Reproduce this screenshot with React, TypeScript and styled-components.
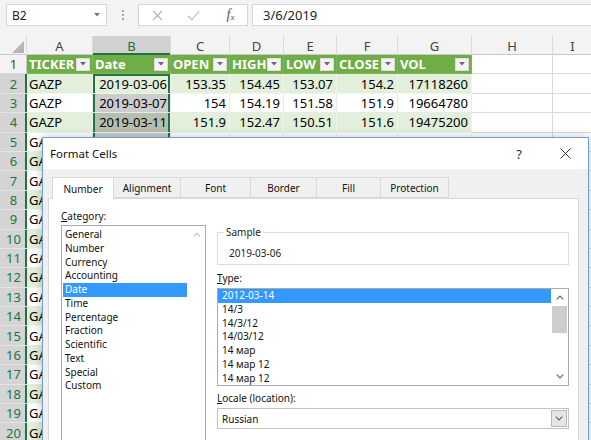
import React from 'react'
import styled, { createGlobalStyle } from 'styled-components'

const GlobalStyle = createGlobalStyle`
  html, body {
    margin: 0;
    padding: 0;
    background: #fff;
  }
  body {
    overflow: hidden;
    font-family: "Noto Sans", "Liberation Sans", sans-serif;
  }
`

type Band = 'head' | 'even' | 'odd' | 'plain'

const bandBg: Record<Band, string> = {
  head: '#70ad47',
  even: '#e2efda',
  odd: '#ffffff',
  plain: '#ffffff'
}

const bandLine: Record<Band, string> = {
  head: '#7db559',
  even: '#f1f6ed',
  odd: '#e9e9e9',
  plain: '#dadada'
}

const GREEN = '#217346'

const Root = styled.div`
  position: relative;
  width: 591px;
  height: 440px;
  overflow: hidden;
  background: #fff;
`

/* ---------- formula bar ---------- */

const TopArea = styled.div`
  box-sizing: border-box;
  height: 36px;
  padding: 4px 0 0 6px;
  display: flex;
  align-items: flex-start;
  background: #f3f3f3;
`

const NameBox = styled.div`
  box-sizing: border-box;
  width: 101px;
  height: 22px;
  display: flex;
  align-items: center;
  justify-content: space-between;
  padding: 0 6px 0 5px;
  background: #fff;
  border: 1px solid #d6d6d6;
  font-size: 12px;
  color: #222;
`

const Dots = styled.div`
  width: 31px;
  height: 22px;
  display: flex;
  flex-direction: column;
  align-items: center;
  justify-content: center;
  gap: 2px;
  & > span {
    width: 2px;
    height: 2px;
    background: #a6a6a6;
  }
`

const FxBox = styled.div`
  box-sizing: border-box;
  width: 110px;
  height: 22px;
  display: grid;
  grid-template-columns: 36px 37px 37px;
  align-items: center;
  justify-items: center;
  background: #fff;
  border: 1px solid #d6d6d6;
`

const Fx = styled.span`
  font-family: "Liberation Serif", serif;
  font-style: italic;
  font-size: 14px;
  color: #555;
  & > sub {
    font-size: 9px;
    vertical-align: -1px;
  }
`

const FormulaInput = styled.div`
  box-sizing: border-box;
  flex: 1;
  height: 22px;
  margin: 0 -2px 0 4px;
  padding-left: 10px;
  display: flex;
  align-items: center;
  background: #fff;
  border: 1px solid #d6d6d6;
  font-size: 13px;
  color: #222;
`

/* ---------- sheet ---------- */

const Sheet = styled.div`
  display: grid;
  grid-template-columns: 27px 66px 78px 59px 54px 53px 61px 74px 81px 40px;
  grid-template-rows: 19px repeat(20, 19.4px);
  font-size: 13px;
  color: #000;
`

const Corner = styled.div`
  box-sizing: border-box;
  display: flex;
  align-items: flex-end;
  justify-content: flex-end;
  padding: 0 2px 2px 0;
  background: #f3f3f3;
  border-right: 1px solid #dadada;
  box-shadow: inset 0 -1px #c8c8c8;
`

const ColHead = styled.div<{ $sel?: boolean }>`
  box-sizing: border-box;
  display: flex;
  align-items: center;
  justify-content: center;
  background: ${p => (p.$sel ? '#d2d2d2' : '#f3f3f3')};
  color: ${p => (p.$sel ? GREEN : '#444')};
  border-right: 1px solid #dadada;
  box-shadow: ${p => (p.$sel ? `inset 0 -2px ${GREEN}` : 'inset 0 -1px #c8c8c8')};
`

const RowHead = styled.div<{ $sel?: boolean }>`
  box-sizing: border-box;
  display: flex;
  align-items: center;
  justify-content: center;
  background: ${p => (p.$sel ? '#d4d4d4' : '#f3f3f3')};
  color: ${p => (p.$sel ? GREEN : '#444')};
  border-bottom: 1px solid ${p => (p.$sel ? '#e4e4e4' : '#dadada')};
  box-shadow: ${p => (p.$sel ? `inset -2px 0 ${GREEN}` : 'inset -1px 0 #c8c8c8')};
`

const Cell = styled.div<{ $band: Band; $right?: boolean; $sel?: 'active' | 'range'; $top?: boolean }>`
  box-sizing: border-box;
  display: flex;
  align-items: center;
  justify-content: ${p => (p.$right ? 'flex-end' : 'flex-start')};
  padding: 0 3px 0 2px;
  overflow: hidden;
  white-space: nowrap;
  background: ${p =>
    p.$sel === 'range'
      ? `linear-gradient(rgba(0,0,0,0.2), rgba(0,0,0,0.2)), ${bandBg[p.$band]}`
      : bandBg[p.$band]};
  border-right: 1px solid ${p => bandLine[p.$band]};
  border-bottom: 1px solid ${p => bandLine[p.$band]};
  box-shadow: ${p =>
    p.$sel
      ? `inset 2px 0 ${GREEN}, inset -2px 0 ${GREEN}${p.$top ? `, inset 0 2px ${GREEN}` : ''}`
      : 'none'};
`

const HeadCell = styled(Cell)`
  justify-content: space-between;
  padding: 0 2px;
  color: #fff;
  font-weight: 700;
`

const FilterBtn = styled.span`
  box-sizing: border-box;
  width: 14px;
  height: 13px;
  display: flex;
  align-items: center;
  justify-content: center;
  background: #f4f4f4;
  border: 1px solid #dcdcdc;
`

/* ---------- dialog ---------- */

const Dialog = styled.div`
  position: absolute;
  left: 42px;
  top: 137px;
  width: 547px;
  height: 330px;
  box-sizing: border-box;
  background: #f0f0f0;
  border: 1px solid #6c9fd6;
  box-shadow: 0 0 10px rgba(0, 0, 0, 0.22);
  font-size: 10px;
  color: #000;
`

const TitleBar = styled.div`
  height: 31px;
  display: flex;
  align-items: center;
  padding-left: 7px;
  background: #fff;
`

const Title = styled.span`
  font-size: 11.5px;
  color: #111;
`

const TitleButtons = styled.div`
  margin-left: auto;
  display: flex;
  height: 100%;
`

const TitleBtn = styled.div`
  width: 46px;
  height: 100%;
  display: flex;
  align-items: center;
  justify-content: center;
  font-size: 13px;
  color: #333;
`

const DialogBody = styled.div`
  padding: 8px 9px 0 5px;
`

const Tabs = styled.div`
  display: flex;
  margin-left: 4px;
  height: 21px;
`

const Tab = styled.div<{ $w: number; $active?: boolean }>`
  position: relative;
  z-index: ${p => (p.$active ? 1 : 0)};
  box-sizing: border-box;
  width: ${p => p.$w}px;
  height: ${p => (p.$active ? 22 : 21)}px;
  margin-right: -1px;
  display: flex;
  align-items: center;
  justify-content: center;
  background: ${p => (p.$active ? '#fff' : '#f0f0f0')};
  border: 1px solid #d9d9d9;
  border-bottom: ${p => (p.$active ? 'none' : '1px solid #d9d9d9')};
  color: #111;
`

const Panel = styled.div`
  box-sizing: border-box;
  height: 270px;
  display: flex;
  gap: 11px;
  padding: 10px 9px 0 12px;
  background: #fff;
  border: 1px solid #d9d9d9;
`

const LeftCol = styled.div`
  width: 145px;
  display: flex;
  flex-direction: column;
`

const RightCol = styled.div`
  width: 352px;
  display: flex;
  flex-direction: column;
  padding-top: 17px;
`

const Label = styled.div<{ $mt?: number; $mb?: number }>`
  line-height: 14px;
  margin-top: ${p => p.$mt ?? 0}px;
  margin-bottom: ${p => p.$mb ?? 0}px;
  color: #111;
`

const Accel = styled.span`
  text-decoration: underline;
`

const Group = styled.fieldset`
  margin: 0;
  padding: 0 0 4px 6px;
  border: 1px solid #dcdcdc;
`

const Legend = styled.legend`
  padding: 0 2px;
  line-height: 13px;
  color: #222;
`

const SampleValue = styled.div`
  padding: 8px 0 0 5px;
  line-height: 13px;
  color: #222;
`

const ListBox = styled.div<{ $h: number }>`
  box-sizing: border-box;
  height: ${p => p.$h}px;
  display: flex;
  background: #fff;
  border: 1px solid #a9abb0;
  overflow: hidden;
`

const Items = styled.div<{ $pt: number }>`
  flex: 1;
  padding-top: ${p => p.$pt}px;
`

const Item = styled.div<{ $sel?: boolean; $inset: number; $pl: number }>`
  line-height: 13.75px;
  height: 13.75px;
  margin: 0 ${p => p.$inset}px;
  padding-left: ${p => p.$pl}px;
  background: ${p => (p.$sel ? '#3399ff' : 'transparent')};
  color: ${p => (p.$sel ? '#fff' : '#111')};
  white-space: nowrap;
`

const ScrollBar = styled.div`
  width: 17px;
  display: flex;
  flex-direction: column;
`

const ScrollBtn = styled.div`
  height: 17px;
  display: flex;
  align-items: center;
  justify-content: center;
`

const Track = styled.div`
  flex: 1;
  display: flex;
  flex-direction: column;
  align-items: center;
`

const Thumb = styled.div`
  width: 15px;
  height: 27px;
  background: #cdcdcd;
`

const Combo = styled.div`
  box-sizing: border-box;
  height: 21px;
  display: flex;
  align-items: center;
  padding: 0 1px 0 4px;
  background: #fff;
  border: 1px solid #c2c2c2;
  color: #111;
`

const ComboBtn = styled.div`
  box-sizing: border-box;
  margin-left: auto;
  width: 16px;
  height: 17px;
  display: flex;
  align-items: center;
  justify-content: center;
  background: #e5e5e5;
  border: 1px solid #b8b8b8;
`

/* ---------- icons ---------- */

const Chevron = ({ up, color }: { up?: boolean; color: string }) => (
  <svg width="8" height="5" viewBox="0 0 8 5">
    <path d={up ? 'M0.8 4.3L4 1.1L7.2 4.3' : 'M0.8 0.7L4 3.9L7.2 0.7'} fill="none" stroke={color} strokeWidth="1.1" />
  </svg>
)

const DownTri = ({ color = '#666' }: { color?: string }) => (
  <svg width="6" height="4" viewBox="0 0 6 4">
    <polygon points="0,0 6,0 3,3.5" fill={color} />
  </svg>
)

/* ---------- data ---------- */

const columns = ['A', 'B', 'C', 'D', 'E', 'F', 'G', 'H', 'I']
const headers = ['TICKER', 'Date', 'OPEN', 'HIGH', 'LOW', 'CLOSE', 'VOL']

// rows 5..20 are mostly behind the dialog
const data: string[][] = [
  ['2019-03-06', '153.35', '154.45', '153.07', '154.2', '17118260'],
  ['2019-03-07', '154', '154.19', '151.58', '151.9', '19664780'],
  ['2019-03-11', '151.9', '152.47', '150.51', '151.6', '19475200'],
  ['2019-03-12', '151.6', '153.2', '151.1', '152.9', '18230410'],
  ['2019-03-13', '153', '154.3', '152.4', '153.8', '17650120'],
  ['2019-03-14', '153.9', '155.1', '153.2', '154.7', '20114300'],
  ['2019-03-15', '154.7', '156', '154.1', '155.6', '21340550'],
  ['2019-03-18', '155.5', '156.4', '154.6', '155.1', '16540870'],
  ['2019-03-19', '155.2', '156.9', '154.9', '156.3', '18877120'],
  ['2019-03-20', '156.3', '157.5', '155.4', '156.8', '19023340'],
  ['2019-03-21', '156.9', '158.2', '156.1', '157.9', '22150680'],
  ['2019-03-22', '157.8', '158.4', '155.7', '156.2', '20330910'],
  ['2019-03-25', '156', '156.8', '154.2', '155', '17890230'],
  ['2019-03-26', '155.1', '157.3', '154.9', '157.1', '18450760'],
  ['2019-03-27', '157.2', '158.6', '156.5', '158.1', '19765420'],
  ['2019-03-28', '158', '159.3', '157.4', '158.9', '21004570'],
  ['2019-03-29', '159', '160.2', '158.3', '159.6', '23118940'],
  ['2019-04-01', '159.7', '161', '159.1', '160.4', '20567810'],
  ['2019-04-02', '160.5', '161.4', '159.2', '159.8', '18876030']
]

const tabs = [
  { label: 'Number', w: 62 },
  { label: 'Alignment', w: 68 },
  { label: 'Font', w: 71 },
  { label: 'Border', w: 67 },
  { label: 'Fill', w: 65 },
  { label: 'Protection', w: 69 }
]

const categories = [
  'General', 'Number', 'Currency', 'Accounting', 'Date', 'Time',
  'Percentage', 'Fraction', 'Scientific', 'Text', 'Special', 'Custom'
]

const types = ['2012-03-14', '14/3', '14/3/12', '14/03/12', '14 мар', '14 мар 12', '14 мар 12']

export default function App() {
  return <Root>
    <GlobalStyle />
    <TopArea>
      <NameBox>
        B2
        <DownTri color="#777" />
      </NameBox>
      <Dots><span /><span /><span /></Dots>
      <FxBox>
        <svg width="11" height="11" viewBox="0 0 11 11">
          <path d="M1 1L10 10M10 1L1 10" stroke="#b3b3b3" strokeWidth="1.1" fill="none" />
        </svg>
        <svg width="13" height="11" viewBox="0 0 13 11">
          <path d="M1 6L4.8 9.8L12 1.5" stroke="#b3b3b3" strokeWidth="1.1" fill="none" />
        </svg>
        <Fx>f<sub>x</sub></Fx>
      </FxBox>
      <FormulaInput>3/6/2019</FormulaInput>
    </TopArea>

    <Sheet>
      <Corner>
        <svg width="12" height="12" viewBox="0 0 12 12">
          <polygon points="12,0 12,12 0,12" fill="#b5b5b5" />
        </svg>
      </Corner>
      {
        columns.map(c => <ColHead key={c} $sel={c === 'B'}>{c}</ColHead>)
      }

      <RowHead>1</RowHead>
      {
        headers.map(h => <HeadCell key={h} $band="head">
          {h}
          <FilterBtn><DownTri color="#6a6a6a" /></FilterBtn>
        </HeadCell>)
      }
      <Cell $band="plain" />
      <Cell $band="plain" />

      {
        data.map((row, i) => {
          const band: Band = i % 2 === 0 ? 'even' : 'odd'
          return <React.Fragment key={i}>
            <RowHead $sel>{i + 2}</RowHead>
            <Cell $band={band}>GAZP</Cell>
            <Cell $band={band} $right $sel={i === 0 ? 'active' : 'range'} $top={i === 0}>{row[0]}</Cell>
            {
              row.slice(1).map((v, j) => <Cell key={j} $band={band} $right>{v}</Cell>)
            }
            <Cell $band="plain" />
            <Cell $band="plain" />
          </React.Fragment>
        })
      }
    </Sheet>

    <Dialog>
      <TitleBar>
        <Title>Format Cells</Title>
        <TitleButtons>
          <TitleBtn>?</TitleBtn>
          <TitleBtn>
            <svg width="11" height="11" viewBox="0 0 11 11">
              <path d="M0.5 0.5L10.5 10.5M10.5 0.5L0.5 10.5" stroke="#333" strokeWidth="1" fill="none" />
            </svg>
          </TitleBtn>
        </TitleButtons>
      </TitleBar>
      <DialogBody>
        <Tabs>
          {
            tabs.map((t, i) => <Tab key={t.label} $w={t.w} $active={i === 0}>{t.label}</Tab>)
          }
        </Tabs>
        <Panel>
          <LeftCol>
            <Label $mb={2}><Accel>C</Accel>ategory:</Label>
            <ListBox $h={230}>
              <Items $pt={2}>
                {
                  categories.map(c => <Item key={c} $inset={1} $pl={2} $sel={c === 'Date'}>{c}</Item>)
                }
              </Items>
              <ScrollBar>
                <ScrollBtn><Chevron up color="#c2c2c2" /></ScrollBtn>
              </ScrollBar>
            </ListBox>
          </LeftCol>
          <RightCol>
            <Group>
              <Legend>Sample</Legend>
              <SampleValue>2019-03-06</SampleValue>
            </Group>
            <Label $mt={6} $mb={3}><Accel>T</Accel>ype:</Label>
            <ListBox $h={98}>
              <Items $pt={0}>
                {
                  types.map((t, i) => <Item key={i} $inset={0} $pl={4} $sel={i === 0}>{t}</Item>)
                }
              </Items>
              <ScrollBar>
                <ScrollBtn><Chevron up color="#606060" /></ScrollBtn>
                <Track><Thumb /></Track>
                <ScrollBtn><Chevron color="#606060" /></ScrollBtn>
              </ScrollBar>
            </ListBox>
            <Label $mt={5} $mb={3}><Accel>L</Accel>ocale (location):</Label>
            <Combo>
              Russian
              <ComboBtn><Chevron color="#606060" /></ComboBtn>
            </Combo>
          </RightCol>
        </Panel>
      </DialogBody>
    </Dialog>
  </Root>
}
